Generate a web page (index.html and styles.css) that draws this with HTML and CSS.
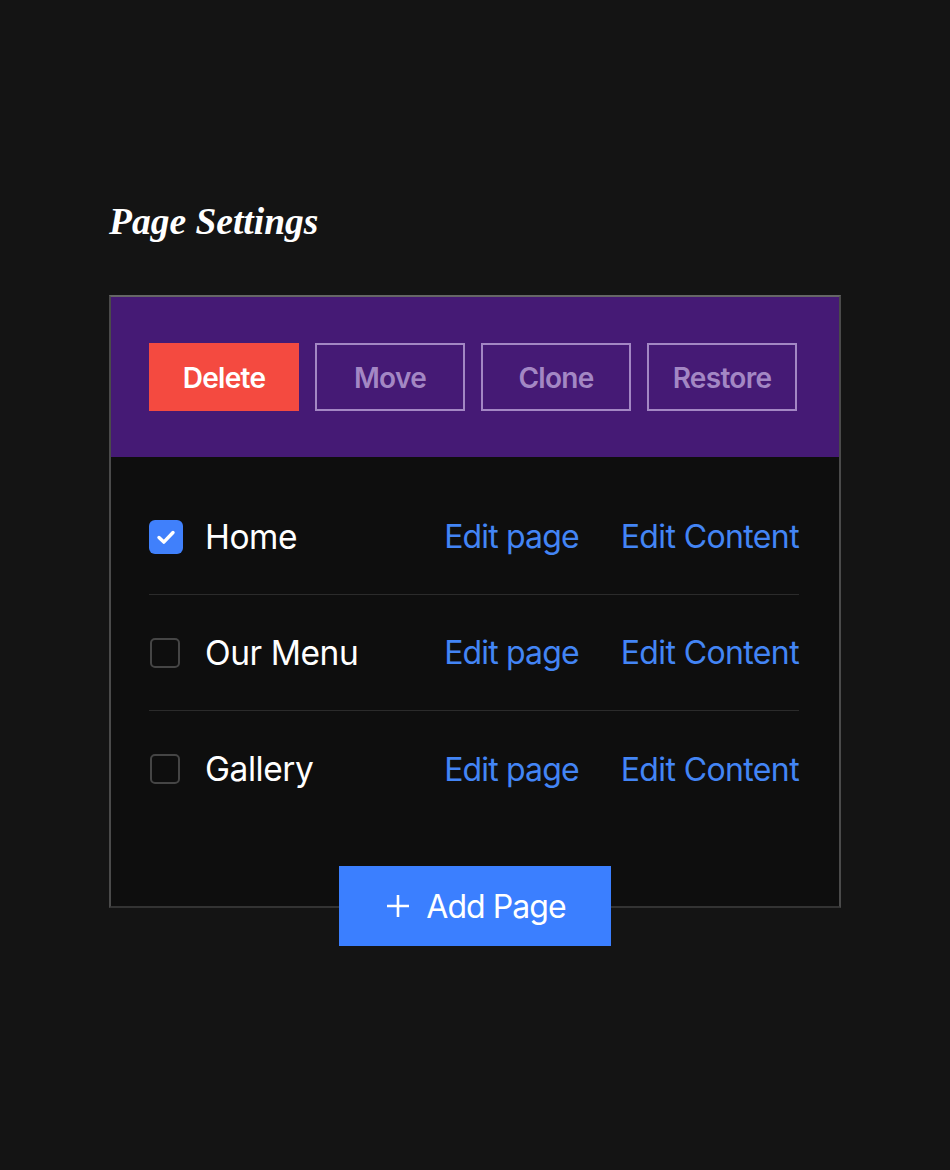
FILE: index.html
```html
<!DOCTYPE html>
<html lang="en">
<head>
    <meta charset="UTF-8">
    <meta name="viewport" content="width=device-width, initial-scale=1.0">
    <title>Page Settings</title>
    <link rel="stylesheet" href="styles.css">
</head>
<body>
    <main class="wrap">
        <h2 class="title">Page Settings</h2>
        <section class="panel">
            <div class="toolbar">
                <button class="btn btn-delete">Delete</button>
                <button class="btn btn-ghost">Move</button>
                <button class="btn btn-ghost">Clone</button>
                <button class="btn btn-ghost">Restore</button>
            </div>
            <ul class="pages">
                <li class="page">
                    <span class="check checked">
                        <svg viewBox="0 0 34 34" width="34" height="34"><path d="M10 17.5l4.8 4.6 9.2-9.6" fill="none" stroke="#fff" stroke-width="3.4" stroke-linecap="round" stroke-linejoin="round"/></svg>
                    </span>
                    <span class="name">Home</span>
                    <a class="link link-page" href="#">Edit page</a>
                    <a class="link" href="#">Edit Content</a>
                </li>
                <li class="page">
                    <span class="check"></span>
                    <span class="name">Our Menu</span>
                    <a class="link link-page" href="#">Edit page</a>
                    <a class="link" href="#">Edit Content</a>
                </li>
                <li class="page">
                    <span class="check"></span>
                    <span class="name">Gallery</span>
                    <a class="link link-page" href="#">Edit page</a>
                    <a class="link" href="#">Edit Content</a>
                </li>
            </ul>
            <button class="add">
                <svg viewBox="0 0 24 24" width="24" height="24"><path d="M12 1v22M1 12h22" fill="none" stroke="#fff" stroke-width="2.6"/></svg>
                <span>Add Page</span>
            </button>
        </section>
    </main>
</body>
</html>
```

FILE: styles.css
```css
* {
    box-sizing: border-box;
}
body {
    margin: 0;
    min-height: 1170px;
    background-color: #141414;
    color: #fff;
    font-family: Inter, "Liberation Sans", sans-serif;
}
.wrap {
    width: 732px;
    margin-left: 109px;
    padding-top: 196px;
}
.title {
    margin: 0 0 48px;
    height: 51px;
    line-height: 51px;
    font-family: "Liberation Serif", serif;
    font-style: italic;
    font-weight: bold;
    font-size: 37.5px;
}
.panel {
    display: flex;
    flex-direction: column;
    height: 613px;
    border: 2px solid #4a4a4a;
    border-top-color: #666;
    border-bottom-color: #333;
    background-color: #0e0e0e;
}
.toolbar {
    display: flex;
    gap: 16px;
    height: 160px;
    padding: 46px 38px;
    background-color: #451a75;
}
.btn {
    width: 150px;
    height: 68px;
    padding: 2px 0 0;
    font-family: inherit;
    font-size: 28px;
    font-weight: 600;
    letter-spacing: -0.7px;
}
.btn-delete {
    border: 0;
    background-color: #f44a40;
    color: #fff;
}
.btn-ghost {
    border: 2px solid #a387c4;
    background: none;
    color: #a387c4;
}
.pages {
    margin: 0;
    padding: 22px 40px 0 38px;
    list-style: none;
}
.page {
    display: flex;
    align-items: center;
    height: 116px;
    border-bottom: 1px solid #2b2b2b;
}
.page:last-child {
    border-bottom: 0;
}
.check {
    flex: none;
    width: 30px;
    height: 30px;
    margin: 0 2px 0 1px;
    border: 2px solid #454545;
    border-radius: 5px;
}
.check.checked {
    width: 34px;
    height: 34px;
    margin: 0 -1px 0 0;
    border: 0;
    border-radius: 6px;
    background-color: #4080fb;
}
.check svg {
    display: block;
}
.name {
    flex: 1;
    margin-left: 23px;
    font-size: 33.5px;
    letter-spacing: -0.45px;
}
.link {
    color: #4385f5;
    font-size: 32px;
    letter-spacing: -0.62px;
    text-decoration: none;
}
.link-page {
    margin-right: 42px;
    letter-spacing: -0.85px;
}
.add {
    display: flex;
    align-items: center;
    justify-content: center;
    gap: 16px;
    flex: none;
    align-self: center;
    width: 272px;
    height: 80px;
    margin-top: auto;
    margin-bottom: -40px;
    padding-left: 8px;
    border: 0;
    background-color: #3b7fff;
    color: #fff;
    font-family: inherit;
    font-size: 32px;
    letter-spacing: -0.95px;
}
```
